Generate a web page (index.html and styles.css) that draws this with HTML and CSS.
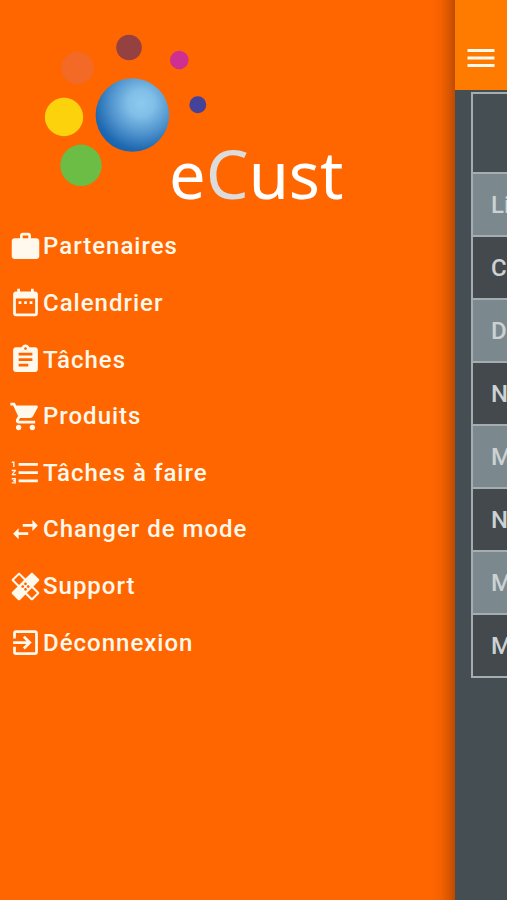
FILE: index.html
```html
<!DOCTYPE html>
<html lang="fr">
<head>
<meta charset="utf-8">
<meta name="viewport" content="width=device-width, initial-scale=1">
<title>eCust</title>
<link rel="stylesheet" href="styles.css">
</head>
<body>
<div class="app">
  <nav class="drawer" aria-label="Menu">
    <svg class="logo" viewBox="0 0 360 217" role="img" aria-label="eCust">
      <defs>
        <radialGradient id="globe" cx="0.62" cy="0.34" r="0.7">
          <stop offset="0" stop-color="#8ccaf0"/>
          <stop offset="0.25" stop-color="#82bfe8"/>
          <stop offset="0.6" stop-color="#4f93cd"/>
          <stop offset="0.9" stop-color="#1f69b1"/>
          <stop offset="1" stop-color="#1763ae"/>
        </radialGradient>
      </defs>
      <circle cx="129" cy="47.5" r="12.8" fill="#964141"/>
      <circle cx="77.5" cy="68" r="16.2" fill="#f26a25"/>
      <circle cx="179.3" cy="60" r="9.3" fill="#d02f92"/>
      <circle cx="197.8" cy="104.7" r="8.5" fill="#45429a"/>
      <circle cx="64" cy="117" r="19.2" fill="#fcd20c"/>
      <circle cx="81" cy="165.3" r="20.7" fill="#6cbd45"/>
      <circle cx="132.4" cy="115" r="36.8" fill="url(#globe)"/>
      <text class="wordmark" x="169" y="199">e<tspan class="wordmark-accent">C</tspan>ust</text>
    </svg>
    <ul class="menu">
      <li><a class="menu-link" href="#partenaires"><svg class="icon" viewBox="0 0 24 24" aria-hidden="true"><path d="M20 6h-4V4c0-1.11-.89-2-2-2h-4c-1.11 0-2 .89-2 2v2H4c-1.11 0-1.99.89-1.99 2L2 19c0 1.11.89 2 2 2h16c1.11 0 2-.89 2-2V8c0-1.11-.89-2-2-2zm-6 0h-4V4h4v2z"/></svg>Partenaires</a></li>
      <li><a class="menu-link" href="#calendrier"><svg class="icon" viewBox="0 0 24 24" aria-hidden="true"><path d="M9 11H7v2h2v-2zm4 0h-2v2h2v-2zm4 0h-2v2h2v-2zm2-7h-1V2h-2v2H8V2H6v2H5c-1.11 0-1.99.9-1.99 2L3 20c0 1.1.89 2 2 2h14c1.1 0 2-.9 2-2V6c0-1.1-.9-2-2-2zm0 16H5V9h14v11z"/></svg>Calendrier</a></li>
      <li><a class="menu-link" href="#taches"><svg class="icon" viewBox="0 0 24 24" aria-hidden="true"><path d="M19 3h-4.18C14.4 1.84 13.3 1 12 1c-1.3 0-2.4.84-2.82 2H5c-1.1 0-2 .9-2 2v14c0 1.1.9 2 2 2h14c1.1 0 2-.9 2-2V5c0-1.1-.9-2-2-2zm-7 0c.55 0 1 .45 1 1s-.45 1-1 1-1-.45-1-1 .45-1 1-1zm2 14H7v-2h7v2zm3-4H7v-2h10v2zm0-4H7V7h10v2z"/></svg>Tâches</a></li>
      <li><a class="menu-link" href="#produits"><svg class="icon" viewBox="0 0 24 24" aria-hidden="true"><path d="M7 18c-1.1 0-1.99.9-1.99 2S5.9 22 7 22s2-.9 2-2-.9-2-2-2zM1 2v2h2l3.6 7.59-1.35 2.45c-.16.28-.25.61-.25.96 0 1.1.9 2 2 2h12v-2H7.42c-.14 0-.25-.11-.25-.25l.03-.12.9-1.63h7.45c.75 0 1.41-.41 1.75-1.03l3.58-6.49c.08-.14.12-.31.12-.48 0-.55-.45-1-1-1H5.21l-.94-2H1zm16 16c-1.1 0-1.99.9-1.99 2s.89 2 1.99 2 2-.9 2-2-.9-2-2-2z"/></svg>Produits</a></li>
      <li><a class="menu-link" href="#a-faire"><svg class="icon" viewBox="0 0 24 24" aria-hidden="true"><path d="M2 17h2v.5H3v1h1v.5H2v1h3v-4H2v1zm1-9h1V4H2v1h1v3zm-1 3h1.8L2 13.1v.9h3v-1H3.2L5 10.9V10H2v1zm5-6v2h14V5H7zm0 14h14v-2H7v2zm0-6h14v-2H7v2z"/></svg>Tâches à faire</a></li>
      <li><a class="menu-link" href="#mode"><svg class="icon" viewBox="0 0 24 24" aria-hidden="true"><path d="M6.99 11L3 15l3.99 4v-3H14v-2H6.99v-3zM21 9l-3.99-4v3H10v2h7.01v3L21 9z"/></svg>Changer de mode</a></li>
      <li><a class="menu-link" href="#support"><svg class="icon" viewBox="0 0 24 24" aria-hidden="true"><path d="M17.73 12.02l3.98-3.98c.39-.39.39-1.02 0-1.41l-4.34-4.34c-.39-.39-1.02-.39-1.41 0l-3.98 3.98L8 2.29C7.8 2.1 7.55 2 7.29 2c-.25 0-.51.1-.7.29L2.25 6.63c-.39.39-.39 1.02 0 1.41l3.98 3.98L2.25 16c-.39.39-.39 1.02 0 1.41l4.34 4.34c.39.39 1.02.39 1.41 0l3.98-3.98 3.98 3.98c.2.2.45.29.71.29.26 0 .51-.1.71-.29l4.34-4.34c.39-.39.39-1.02 0-1.41l-3.99-3.98zM12 9c.55 0 1 .45 1 1s-.45 1-1 1-1-.45-1-1 .45-1 1-1zm-4.71 1.96L3.66 7.34l3.63-3.63 3.62 3.62-3.62 3.63zM10 13c-.55 0-1-.45-1-1s.45-1 1-1 1 .45 1 1-.45 1-1 1zm2 2c-.55 0-1-.45-1-1s.45-1 1-1 1 .45 1 1-.45 1-1 1zm2-4c.55 0 1 .45 1 1s-.45 1-1 1-1-.45-1-1 .45-1 1-1zm2.66 9.34l-3.63-3.62 3.63-3.63 3.62 3.62-3.62 3.63z"/></svg>Support</a></li>
      <li><a class="menu-link" href="#deconnexion"><svg class="icon" viewBox="0 0 24 24" aria-hidden="true"><path d="M10.09 15.59L11.5 17l5-5-5-5-1.41 1.41L12.67 11H3v2h9.67l-2.58 2.59zM19 3H5c-1.11 0-2 .9-2 2v4h2V5h14v14H5v-4H3v4c0 1.1.89 2 2 2h14c1.1 0 2-.9 2-2V5c0-1.1-.9-2-2-2z"/></svg>Déconnexion</a></li>
    </ul>
  </nav>
  <main class="page">
    <header class="topbar">
      <button class="menu-button" type="button" aria-label="Menu"><svg class="menu-icon" viewBox="0 0 24 24" aria-hidden="true"><path d="M3 18h18v-2H3v2zm0-5h18v-2H3v2zm0-7v2h18V6H3z"/></svg></button>
    </header>
    <table class="details">
      <thead><tr><th></th></tr></thead>
      <tbody>
        <tr><td>Li</td></tr>
        <tr><td>C</td></tr>
        <tr><td>D</td></tr>
        <tr><td>N</td></tr>
        <tr><td>M</td></tr>
        <tr><td>N</td></tr>
        <tr><td>M</td></tr>
        <tr><td>M</td></tr>
      </tbody>
    </table>
  </main>
</div>
</body>
</html>
```
FILE: styles.css
```css
* {
  box-sizing: border-box;
}

body {
  margin: 0;
  font-family: Roboto, "Liberation Sans", sans-serif;
  font-size: 24px;
  font-weight: 500;
  line-height: 32px;
}

.app {
  display: grid;
  grid-template-columns: minmax(0, 1fr) 52px;
  min-height: 100vh;
}

.drawer {
  background: linear-gradient(to left, #bd4b00, #d95600 6px, #f46100 14px, #ff6600 24px);
}

.logo {
  display: block;
  width: 360px;
  max-width: 100%;
}

.wordmark {
  font-family: "Noto Sans", "Open Sans", sans-serif;
  font-size: 65px;
  font-weight: 400;
  fill: #ffffff;
}

.wordmark-accent {
  font-size: 68px;
  fill: #dcdcdc;
}

.menu {
  display: grid;
  grid-auto-rows: 1fr;
  min-height: 454px;
  margin: 0;
  padding: 1px 9px 0;
  list-style: none;
}

.menu-link {
  display: flex;
  align-items: center;
  gap: 1px;
  height: 100%;
  color: #fff8ec;
  letter-spacing: 1px;
  text-decoration: none;
}

.icon {
  flex: none;
  width: 33px;
  height: 33px;
  fill: currentColor;
}

.page {
  overflow: hidden;
  background: #454e53;
}

.topbar {
  display: flex;
  height: 90px;
  padding: 26px 8px 0;
  background: #ff7b00;
}

.menu-button {
  display: flex;
  align-items: center;
  height: 64px;
  padding: 0;
  border: 0;
  background: none;
}

.menu-icon {
  width: 36px;
  height: 36px;
  fill: #fff8ec;
}

.details {
  width: calc(100% - 16px);
  margin: 2px 0 0 16px;
  border-collapse: collapse;
  color: #cdd1d3;
}

.details th,
.details td {
  height: 63px;
  padding: 0 0 0 18px;
  border: 2px solid #a5adb0;
  border-right: 0;
  background: #43494c;
  text-align: left;
}

.details th {
  height: 80px;
  background: #454e53;
}

.details tbody tr:nth-child(odd) td {
  background: #7b898e;
}
```
